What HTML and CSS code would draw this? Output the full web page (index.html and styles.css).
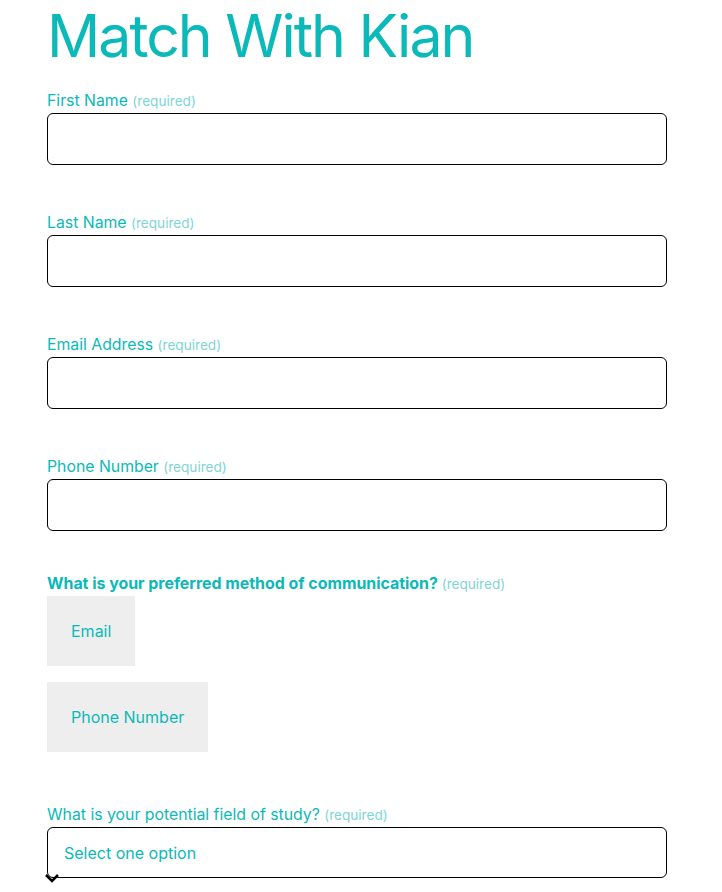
FILE: index.html
```html
<!DOCTYPE html>
<html lang="en">
<head>
<meta charset="utf-8">
<title>Match With Kian</title>
<link rel="stylesheet" href="styles.css">
</head>
<body>
<main class="page">
  <h1 class="title">Match With Kian</h1>
  <form class="form">
    <div class="field">
      <label class="label">First Name <span class="req">(required)</span></label>
      <input class="input" type="text">
    </div>
    <div class="field">
      <label class="label">Last Name <span class="req">(required)</span></label>
      <input class="input" type="text">
    </div>
    <div class="field">
      <label class="label">Email Address <span class="req">(required)</span></label>
      <input class="input" type="text">
    </div>
    <div class="field">
      <label class="label">Phone Number <span class="req">(required)</span></label>
      <input class="input" type="text">
    </div>
    <div class="field field-radio">
      <div class="label label-bold">What is your preferred method of communication? <span class="req">(required)</span></div>
      <div class="options">
        <div class="option">Email</div>
        <div class="option">Phone Number</div>
      </div>
    </div>
    <div class="field field-select">
      <label class="label">What is your potential field of study? <span class="req">(required)</span></label>
      <div class="select-wrap">
        <div class="select">Select one option</div>
        <svg class="chev" width="16" height="12" viewBox="0 0 16 12"><path d="M2 3 L8 9 L14 3" fill="none" stroke="#000" stroke-width="2.5"/></svg>
      </div>
    </div>
  </form>
</main>
</body>
</html>
```

FILE: styles.css
```css
* { box-sizing: border-box; }
html, body { margin: 0; padding: 0; background: #fff; }
body {
  font-family: Inter, "Noto Sans", "Liberation Sans", sans-serif;
  color: #0bb9b9;
}
.page {
  padding-left: 47px;
  width: 667px;
  padding-bottom: 40px;
}
.title {
  margin: 0;
  font-size: 59px;
  line-height: 72px;
  font-weight: 400;
  letter-spacing: -2px;
  color: #0bb9b9;
}
.form {
  display: flex;
  flex-direction: column;
  margin-top: 19px;
}
.field {
  display: flex;
  flex-direction: column;
  gap: 4px;
  margin-bottom: 48px;
}
.field-select { margin-bottom: 0; }
.label {
  display: block;
  font-size: 15.8px;
  line-height: 20px;
  height: 18px;
  color: #0bb9b9;
}
.label-bold { font-weight: 700; font-size: 15.9px; }
.req {
  font-size: 13.6px;
  line-height: 1;
  font-weight: 400;
  color: #7dd6d6;
}
.input {
  display: block;
  width: 620px;
  height: 52px;
  border: 1px solid #000;
  border-radius: 6px;
  background: #fff;
  margin: 0;
  font: inherit;
}
.field-radio { margin-top: -5px; margin-bottom: 53px; }
.options {
  display: flex;
  flex-direction: column;
  align-items: flex-start;
  gap: 16px;
}
.option {
  background: #eeeeee;
  padding: 0 24px;
  height: 70px;
  line-height: 70px;
  font-size: 16px;
  color: #0bb9b9;
}
.select-wrap { position: relative; }
.select {
  width: 620px;
  height: 51px;
  border: 1px solid #000;
  border-radius: 6px;
  padding: 0 16px;
  line-height: 51px;
  font-size: 16px;
  color: #0bb9b9;
}
.chev {
  position: absolute;
  left: -3px;
  top: 45px;
}
```
